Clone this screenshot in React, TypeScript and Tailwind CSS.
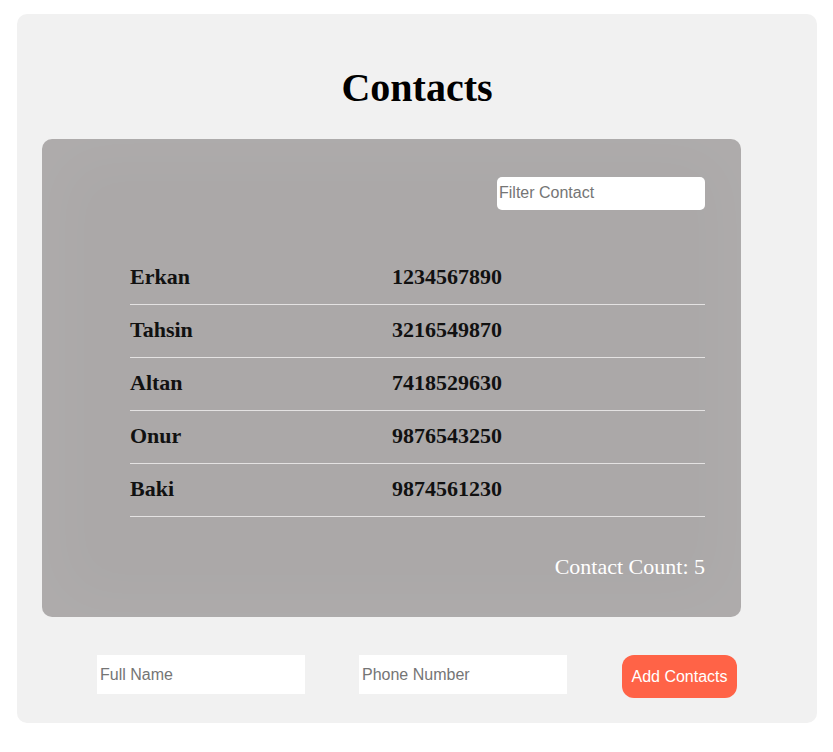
import { useState } from 'react';

type Contact = { id: number; name: string; phone: string };

const initialContacts: Contact[] = [
  { id: 1, name: 'Erkan', phone: '1234567890' },
  { id: 2, name: 'Tahsin', phone: '3216549870' },
  { id: 3, name: 'Altan', phone: '7418529630' },
  { id: 4, name: 'Onur', phone: '9876543250' },
  { id: 5, name: 'Baki', phone: '9874561230' },
];

const App = () => {
  const [contacts, setContacts] = useState<Contact[]>(initialContacts);
  const [filter, setFilter] = useState('');
  const [fullName, setFullName] = useState('');
  const [phone, setPhone] = useState('');

  const filtered = contacts.filter((c) =>
    `${c.name} ${c.phone}`.toLowerCase().includes(filter.toLowerCase())
  );

  const addContact = () => {
    if (!fullName || !phone) return;
    setContacts([...contacts, { id: Date.now(), name: fullName, phone }]);
    setFullName('');
    setPhone('');
  };

  return (
    <div className="min-h-screen bg-white pt-[14px] pl-[17px]">
      <div className="w-[800px] h-[709px] bg-[#f1f1f1] rounded-[10px] pt-[51px]">
        {/* Title */}
        <h1 className="text-center text-[40px] leading-[46px] font-bold text-black font-['Liberation_Serif',serif]">
          Contacts
        </h1>

        {/* Contacts panel */}
        <div className="ml-[25px] mt-[28px] w-[699px] h-[478px] rounded-[10px] bg-[#aba8a8] shadow-[inset_0_0_60px_20px_rgba(255,255,255,0.05)] pt-[38px] pr-[36px] pl-[88px]">
          <div className="flex justify-end">
            <input
              value={filter}
              onChange={(e) => setFilter(e.target.value)}
              placeholder="Filter Contact"
              className="w-[208px] h-[33px] rounded-[5px] bg-white px-[2px] pb-[2px] text-[16px] text-black placeholder:text-[#757575] outline-none font-['Liberation_Sans',sans-serif]"
            />
          </div>

          <ul className="mt-[42px] font-['Liberation_Serif',serif]">
            {filtered.map((c) => (
              <li
                key={c.id}
                className="flex items-center h-[53px] pb-[4px] border-b border-[#e4e2e2] text-[22px] font-bold text-[#111]"
              >
                <span className="w-[262px]">{c.name}</span>
                <span>{c.phone}</span>
              </li>
            ))}
          </ul>

          <p className="mt-[33px] text-right text-[22px] text-white font-['Liberation_Serif',serif]">
            Contact Count: {filtered.length}
          </p>
        </div>

        {/* Add contact form */}
        <div className="flex items-start mt-[38px] pl-[80px]">
          <input
            value={fullName}
            onChange={(e) => setFullName(e.target.value)}
            placeholder="Full Name"
            className="w-[208px] h-[39px] bg-white px-[3px] text-[16px] text-black placeholder:text-[#757575] outline-none font-['Liberation_Sans',sans-serif]"
          />
          <input
            value={phone}
            onChange={(e) => setPhone(e.target.value)}
            placeholder="Phone Number"
            className="ml-[54px] w-[208px] h-[39px] bg-white px-[3px] text-[16px] text-black placeholder:text-[#757575] outline-none font-['Liberation_Sans',sans-serif]"
          />
          <button
            onClick={addContact}
            className="ml-[55px] w-[115px] h-[43px] rounded-[12px] bg-[#ff6347] text-white text-[16px] font-['Liberation_Sans',sans-serif]"
          >
            Add Contacts
          </button>
        </div>
      </div>
    </div>
  );
};

export default App;
